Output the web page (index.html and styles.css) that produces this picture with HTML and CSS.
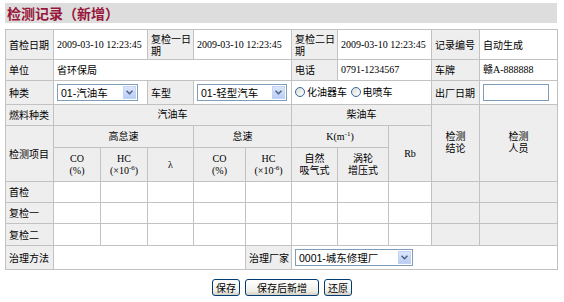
FILE: index.html
```html
<!DOCTYPE html>
<html lang="zh-CN">
<head>
  <meta charset="UTF-8"/>
  <title>检测记录（新增）</title>
  <link rel="stylesheet" href="styles.css">
</head>
<body>
  <div class="title-bar">检测记录（新增）</div>
  <table class="record">
    <colgroup>
      <col style="width:48px"><col style="width:47px"><col style="width:47px"><col style="width:46px">
      <col style="width:52px"><col style="width:46px"><col style="width:46px"><col style="width:51px">
      <col style="width:43px"><col style="width:48px"><col style="width:78px">
    </colgroup>
    <tr class="r-date">
      <td class="lbl">首检日期</td>
      <td colspan="2">2009-03-10 12:23:45</td>
      <td class="lbl">复检一日期</td>
      <td colspan="2">2009-03-10 12:23:45</td>
      <td class="lbl">复检二日期</td>
      <td colspan="2">2009-03-10 12:23:45</td>
      <td class="lbl">记录编号</td>
      <td class="cjk">自动生成</td>
    </tr>
    <tr class="r-std">
      <td class="lbl">单位</td>
      <td colspan="5" class="cjk">省环保局</td>
      <td class="lbl">电话</td>
      <td colspan="2">0791-1234567</td>
      <td class="lbl">车牌</td>
      <td>赣A-888888</td>
    </tr>
    <tr class="r-form">
      <td class="lbl">种类</td>
      <td colspan="2">
        <span class="combo w-kind">
          <select><option>01-汽油车</option></select>
          <span class="arrow"><svg width="7" height="5" viewBox="0 0 7 5"><path d="M0.5 0.8 L3.5 3.8 L6.5 0.8" fill="none" stroke="#4d6185" stroke-width="1.5"/></svg></span>
        </span>
      </td>
      <td class="lbl">车型</td>
      <td colspan="2">
        <span class="combo w-type">
          <select><option>01-轻型汽车</option></select>
          <span class="arrow"><svg width="7" height="5" viewBox="0 0 7 5"><path d="M0.5 0.8 L3.5 3.8 L6.5 0.8" fill="none" stroke="#4d6185" stroke-width="1.5"/></svg></span>
        </span>
      </td>
      <td colspan="3" class="radios">
        <label><span class="radio"></span>化油器车</label>
        <label><span class="radio"></span>电喷车</label>
      </td>
      <td class="lbl">出厂日期</td>
      <td><input type="text" class="txt"></td>
    </tr>
    <tr class="r-std">
      <td class="lbl">燃料种类</td>
      <td colspan="5" class="hd">汽油车</td>
      <td colspan="3" class="hd">柴油车</td>
      <td rowspan="3" class="hd">检测<br>结论</td>
      <td rowspan="3" class="hd">检测<br>人员</td>
    </tr>
    <tr class="r-head">
      <td rowspan="2" class="lbl">检测项目</td>
      <td colspan="3" class="hd">高怠速</td>
      <td colspan="2" class="hd">怠速</td>
      <td colspan="2" class="hd">K(m<sup>-1</sup>)</td>
      <td rowspan="2" class="hd">Rb</td>
    </tr>
    <tr class="r-unit">
      <td class="hd">CO<br>(%)</td>
      <td class="hd">HC<br>(×10<sup>-6</sup>)</td>
      <td class="hd">λ</td>
      <td class="hd">CO<br>(%)</td>
      <td class="hd">HC<br>(×10<sup>-6</sup>)</td>
      <td class="hd">自然<br>吸气式</td>
      <td class="hd">涡轮<br>增压式</td>
    </tr>
    <tr class="r-std">
      <td class="lbl">首检</td>
      <td></td><td></td><td></td><td></td><td></td><td></td><td></td><td></td>
      <td class="lbl"></td><td class="lbl"></td>
    </tr>
    <tr class="r-std">
      <td class="lbl">复检一</td>
      <td></td><td></td><td></td><td></td><td></td><td></td><td></td><td></td>
      <td class="lbl"></td><td class="lbl"></td>
    </tr>
    <tr class="r-std r-last">
      <td class="lbl">复检二</td>
      <td></td><td></td><td></td><td></td><td></td><td></td><td></td><td></td>
      <td class="lbl"></td><td class="lbl"></td>
    </tr>
    <tr class="r-form">
      <td class="lbl">治理方法</td>
      <td colspan="4"></td>
      <td class="lbl">治理厂家</td>
      <td colspan="5">
        <span class="combo w-shop">
          <select><option>0001-城东修理厂</option></select>
          <span class="arrow"><svg width="7" height="5" viewBox="0 0 7 5"><path d="M0.5 0.8 L3.5 3.8 L6.5 0.8" fill="none" stroke="#4d6185" stroke-width="1.5"/></svg></span>
        </span>
      </td>
    </tr>
  </table>
  <div class="actions">
    <button type="button">保存</button>
    <button type="button" class="wide">保存后新增</button>
    <button type="button">还原</button>
  </div>
</body>
</html>
```

FILE: styles.css
```css
body {
  margin: 0;
  padding: 3px 7px 0 5px;
  background: #fff;
  font-family: "Liberation Serif", "Noto Sans CJK SC", serif;
  font-size: 10px;
  color: #000;
}
.title-bar {
  background: #dddddd;
  height: 20px;
  line-height: 20px;
  padding-left: 2px;
  font-family: "Noto Sans CJK SC", sans-serif;
  font-size: 14px;
  font-weight: bold;
  color: #98173a;
}
.record {
  margin-top: 6px;
  width: 552px;
  border-collapse: collapse;
  table-layout: fixed;
  border: 1px solid #a8a8a8;
}
.record td {
  border: 1px solid #c2c2c2;
  padding: 0 1px 0 3px;
  line-height: 12px;
  vertical-align: middle;
  background: #fff;
}
.record td.lbl,
.record td.cjk {
  font-family: "Noto Sans CJK SC", sans-serif;
}
.record td.lbl {
  background: #eeeeee;
}
.record td.hd {
  background: #eeeeee;
  text-align: center;
  padding: 0 1px;
}
.record sup {
  font-size: 7px;
  line-height: 0;
  vertical-align: 4px;
}
.r-date { height: 30px; }
.r-std { height: 21px; }
.r-last { height: 22px; }
.r-form { height: 24px; }
.r-head { height: 22px; }
.r-unit { height: 34px; }

.combo {
  position: relative;
  display: inline-block;
  vertical-align: middle;
  height: 17px;
}
.combo select {
  appearance: none;
  -webkit-appearance: none;
  width: 100%;
  height: 17px;
  margin: 0;
  padding: 0 0 0 3px;
  border: 1px solid #7f9db9;
  border-radius: 0;
  background: #fff;
  font-family: "Liberation Sans", "Noto Sans CJK SC", sans-serif;
  font-size: 10.5px;
  color: #000;
}
.combo .arrow {
  position: absolute;
  top: 2px;
  right: 2px;
  width: 13px;
  height: 13px;
  background: linear-gradient(#dce6fb, #b9cdf5);
  border: 1px solid #c3d3f4;
  box-sizing: border-box;
  display: flex;
  align-items: center;
  justify-content: center;
}
.w-kind { width: 81px; }
.w-type { width: 90px; }
.w-shop { width: 118px; }

.radios label {
  display: inline-flex;
  align-items: center;
  font-family: "Noto Sans CJK SC", sans-serif;
  margin-right: 1px;
}
.radio {
  display: inline-block;
  width: 10px;
  height: 10px;
  box-sizing: border-box;
  border: 1px solid #3466a0;
  border-radius: 50%;
  background: linear-gradient(135deg, #dcdcd6, #ffffff);
  margin-right: 2px;
}
.txt {
  display: block;
  width: 66px;
  height: 17px;
  box-sizing: border-box;
  border: 1px solid #7f9db9;
  padding: 0 2px;
  font-size: 10px;
}

.actions {
  display: flex;
  justify-content: center;
  gap: 5px;
  margin-top: 9px;
  padding-left: 2px;
}
.actions button {
  height: 17px;
  padding: 0 3px;
  border: 1px solid #003c74;
  border-radius: 3px;
  background: linear-gradient(#ffffff, #f0f0ea 70%, #d6d0c5);
  font-family: "Noto Sans CJK SC", sans-serif;
  font-size: 10px;
  line-height: 14px;
  color: #000;
}
.actions button.wide {
  padding: 0 11px;
}
```
